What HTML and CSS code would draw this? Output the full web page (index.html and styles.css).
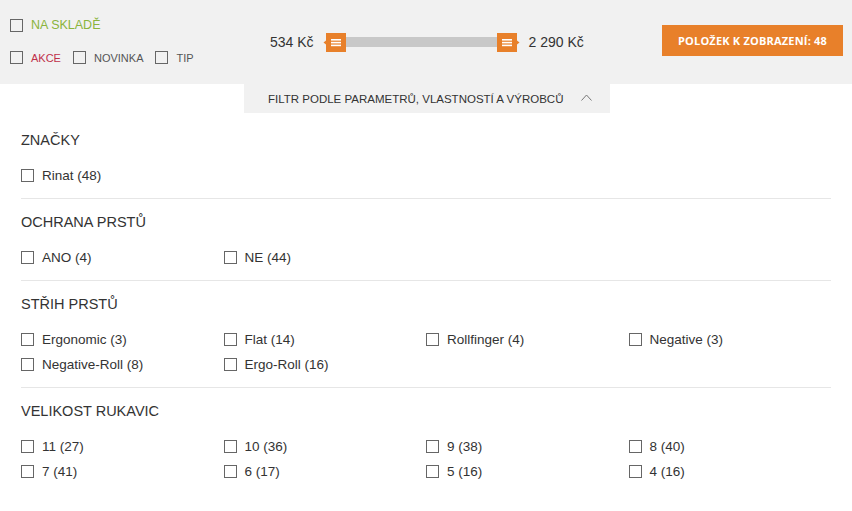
FILE: index.html
```html
<!DOCTYPE html>
<html lang="cs">
<head>
  <meta charset="UTF-8">
  <title>Filtr</title>
  <link rel="stylesheet" href="styles.css">
</head>
<body>
<div class="topbar">
  <div class="quick">
    <label class="qcheck green"><span class="box"></span>NA SKLADĚ</label>
    <div class="qrow">
      <label class="qcheck red"><span class="box"></span>AKCE</label>
      <label class="qcheck"><span class="box"></span>NOVINKA</label>
      <label class="qcheck"><span class="box"></span>TIP</label>
    </div>
  </div>

  <div class="price">
    <span class="price-val">534 Kč</span>
    <div class="slider">
      <svg class="handle" width="23" height="19" viewBox="0 0 23 19">
        <path d="M3 0H23V19H3V11.5L0.5 9.5L3 7.5Z" fill="#e8802a"/>
        <rect x="8" y="6" width="10" height="1.6" fill="#fff"/>
        <rect x="8" y="8.8" width="10" height="1.6" fill="#fff"/>
        <rect x="8" y="11.6" width="10" height="1.6" fill="#fff"/>
      </svg>
      <div class="track"></div>
      <svg class="handle" width="23" height="19" viewBox="0 0 23 19">
        <path d="M0 0H20V7.5L22.5 9.5L20 11.5V19H0Z" fill="#e8802a"/>
        <rect x="5" y="6" width="10" height="1.6" fill="#fff"/>
        <rect x="5" y="8.8" width="10" height="1.6" fill="#fff"/>
        <rect x="5" y="11.6" width="10" height="1.6" fill="#fff"/>
      </svg>
    </div>
    <span class="price-val">2 290 Kč</span>
  </div>

  <button class="show-btn">POLOŽEK K ZOBRAZENÍ: 48</button>
</div>

<div class="tab-wrap">
  <div class="tab">
    FILTR PODLE PARAMETRŮ, VLASTNOSTÍ A VÝROBCŮ
    <svg width="11" height="7" viewBox="0 0 11 7"><path d="M0.5 6.5L5.5 1L10.5 6.5" fill="none" stroke="#777" stroke-width="1"/></svg>
  </div>
</div>

<div class="filters">
  <div class="group">
    <h2>ZNAČKY</h2>
    <div class="opts">
      <label class="opt"><span class="box"></span>Rinat (48)</label>
    </div>
  </div>
  <div class="group">
    <h2>OCHRANA PRSTŮ</h2>
    <div class="opts">
      <label class="opt"><span class="box"></span>ANO (4)</label>
      <label class="opt"><span class="box"></span>NE (44)</label>
    </div>
  </div>
  <div class="group">
    <h2>STŘIH PRSTŮ</h2>
    <div class="opts">
      <label class="opt"><span class="box"></span>Ergonomic (3)</label>
      <label class="opt"><span class="box"></span>Flat (14)</label>
      <label class="opt"><span class="box"></span>Rollfinger (4)</label>
      <label class="opt"><span class="box"></span>Negative (3)</label>
      <label class="opt"><span class="box"></span>Negative-Roll (8)</label>
      <label class="opt"><span class="box"></span>Ergo-Roll (16)</label>
    </div>
  </div>
  <div class="group last">
    <h2>VELIKOST RUKAVIC</h2>
    <div class="opts">
      <label class="opt"><span class="box"></span>11 (27)</label>
      <label class="opt"><span class="box"></span>10 (36)</label>
      <label class="opt"><span class="box"></span>9 (38)</label>
      <label class="opt"><span class="box"></span>8 (40)</label>
      <label class="opt"><span class="box"></span>7 (41)</label>
      <label class="opt"><span class="box"></span>6 (17)</label>
      <label class="opt"><span class="box"></span>5 (16)</label>
      <label class="opt"><span class="box"></span>4 (16)</label>
    </div>
  </div>
</div>
</body>
</html>
```

FILE: styles.css
```css
body {
  margin: 0;
  font-family: "Liberation Sans", Arial, sans-serif;
  color: #333;
  background: #fff;
}

.box {
  display: inline-block;
  width: 11px;
  height: 11px;
  border: 1px solid #666;
  flex: none;
}

/* horni pruh */
.topbar {
  background: #f1f1f1;
  height: 84px;
  display: flex;
  align-items: center;
  padding: 0 9px 0 10px;
}

.quick {
  width: 260px;
  display: flex;
  flex-direction: column;
  gap: 19px;
  margin-top: -2px;
}

.qrow {
  display: flex;
  gap: 12px;
}

.qcheck {
  display: flex;
  align-items: center;
  gap: 8px;
  font-size: 11px;
  color: #555;
}

.qcheck.green {
  color: #8ab43c;
  font-size: 12.5px;
}

.qcheck.red {
  color: #c0304a;
}

.price {
  display: flex;
  align-items: center;
  font-size: 14px;
  color: #333;
}

.slider {
  display: flex;
  align-items: center;
  margin: 0 9px;
}

.handle {
  display: block;
}

.track {
  width: 151px;
  height: 10px;
  background: #c8c8c8;
}

.show-btn {
  margin-left: auto;
  margin-top: -4px;
  background: #e8802a;
  color: #fff;
  border: none;
  width: 181px;
  height: 31px;
  font-family: "Open Sans", sans-serif;
  font-weight: 700;
  font-size: 11px;
  letter-spacing: 0.2px;
  padding: 0;
}

/* zalozka filtru */
.tab-wrap {
  display: flex;
  padding-left: 244px;
}

.tab {
  width: 366px;
  height: 29px;
  background: #f1f1f1;
  display: flex;
  align-items: center;
  gap: 18px;
  font-size: 11.5px;
  color: #333;
  padding-left: 24px;
  box-sizing: border-box;
}

.tab svg {
  margin-top: -3px;
}

/* parametry */
.filters {
  padding: 4px 21px 0;
}

.group {
  border-bottom: 1px solid #e6e6e6;
  padding: 13px 0 10px;
}

.group.last {
  border-bottom: none;
}

.group h2 {
  margin: 0 0 13px;
  font-size: 14.5px;
  font-weight: 400;
  line-height: 20px;
  color: #333;
}

.opts {
  display: grid;
  grid-template-columns: repeat(4, 1fr);
}

.opt {
  display: flex;
  align-items: center;
  gap: 8px;
  height: 25px;
  font-size: 13.5px;
  color: #333;
}
```
